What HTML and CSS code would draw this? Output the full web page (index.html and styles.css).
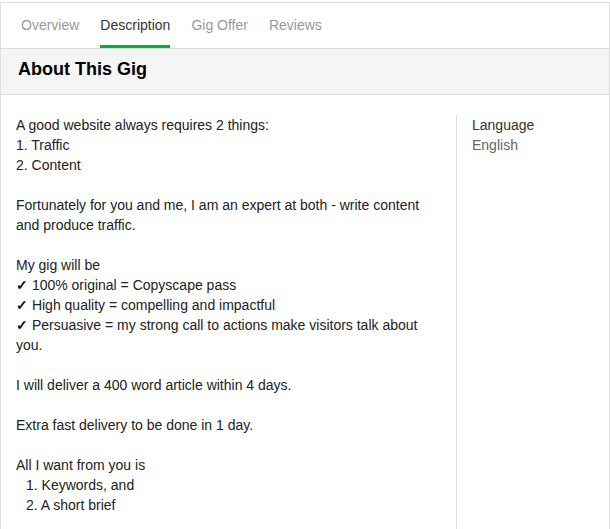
FILE: index.html
```html
<!DOCTYPE html>
<html lang="en">
    <head>
        <meta charset="UTF-8">
        <meta name="viewport" content="width=device-width, initial-scale=1.0">
        <title>About This Gig</title>

        <link rel="stylesheet" href="styles.css">
    </head>
    <body>
        <div class="gig-box">
            <nav class="tabs">
                <a href="#" class="tab">Overview</a>
                <a href="#" class="tab active">Description</a>
                <a href="#" class="tab">Gig Offer</a>
                <a href="#" class="tab">Reviews</a>
            </nav>

            <header class="gig-header">
                <h2>About This Gig</h2>
            </header>

            <section class="gig-body">
                <article class="description">
                    <p>A good website always requires 2 things:<br>1. Traffic<br>2. Content</p>
                    <p>Fortunately for you and me, I am an expert at both - write content and produce traffic.</p>
                    <p>My gig will be<br><span class="check">&#10003;</span> 100% original = Copyscape pass<br><span class="check">&#10003;</span> High quality = compelling and impactful<br><span class="check">&#10003;</span> Persuasive = my strong call to actions make visitors talk about you.</p>
                    <p>I will deliver a 400 word article within 4 days.</p>
                    <p>Extra fast delivery to be done in 1 day.</p>
                    <p>All I want from you is<br><span class="indent">1. Keywords, and</span><br><span class="indent">2. A short brief</span></p>
                </article>

                <aside class="meta">
                    <div class="meta-label">Language</div>
                    <div class="meta-value">English</div>
                </aside>
            </section>
        </div>
    </body>
</html>
```

FILE: styles.css
```css
* {
    padding: 0px;
    margin: 0px;
    box-sizing: border-box;
    font-family: "Liberation Sans", Arial, Helvetica, sans-serif;
}

body {
    background-color: #fff;
    padding-top: 2px;
}

.gig-box {
    width: 610px;
    border: 1px solid #ddd;
    border-bottom: none;
    min-height: 527px;
}

.tabs {
    display: flex;
    gap: 21px;
    padding-left: 20px;
}

.tab {
    display: block;
    padding-top: 14px;
    padding-bottom: 12px;
    line-height: 16px;
    font-size: 14px;
    color: #999;
    text-decoration: none;
    border-bottom: 3px solid transparent;
}

.tab.active {
    color: #333;
    border-bottom-color: #00b22d;
}

.gig-header {
    background-color: #f5f5f5;
    border-top: 1px solid #ddd;
    border-bottom: 1px solid #ddd;
    padding: 8px 17px 13px;
}

.gig-header h2 {
    font-size: 18px;
    line-height: 24px;
    color: #000;
}

.gig-body {
    display: flex;
    padding-top: 20px;
}

.description {
    width: 455px;
    padding: 0 15px;
    font-size: 14px;
    line-height: 20px;
    color: #222;
}

.description p {
    margin-bottom: 20px;
}

.check {
    display: inline-block;
    line-height: 14px;
    font-weight: bold;
    color: #111;
}

.indent {
    padding-left: 10px;
}

.meta {
    flex: 1;
    border-left: 1px solid #ddd;
    padding-left: 15px;
    font-size: 14px;
    line-height: 20px;
    min-height: 414px;
}

.meta-label {
    color: #333;
}

.meta-value {
    color: #666;
}
```
